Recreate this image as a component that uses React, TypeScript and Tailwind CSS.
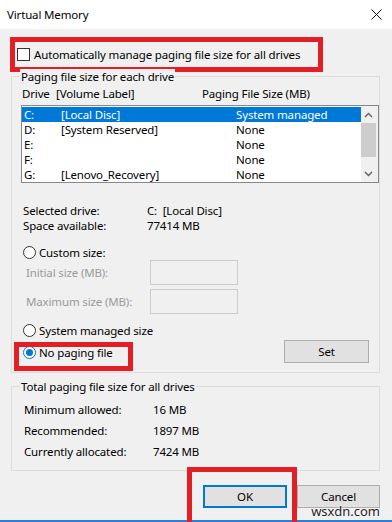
import React from "react";

const font = { fontFamily: '"Noto Sans", "Open Sans", sans-serif' };

function Radio({ checked }: { checked?: boolean }) {
  return (
    <span
      className={
        "flex h-[13px] w-[13px] shrink-0 items-center justify-center rounded-full border bg-white " +
        (checked ? "border-[#0078d7]" : "border-[#333333]")
      }
    >
      {checked && <span className="h-[7px] w-[7px] rounded-full bg-[#0078d7]" />}
    </span>
  );
}

function GroupLabel({ children }: { children: React.ReactNode }) {
  return (
    <div className="-mt-[8px] ml-[8px] w-fit bg-[#f0f0f0] px-[1px] leading-[15px]">{children}</div>
  );
}

const drives = [
  { d: "C:", label: "[Local Disc]", size: "System managed" },
  { d: "D:", label: "[System Reserved]", size: "None" },
  { d: "E:", label: "", size: "None" },
  { d: "F:", label: "", size: "None" },
  { d: "G:", label: "[Lenovo_Recovery]", size: "None" },
];

export default function App() {
  return (
    <div
      className="relative flex h-[522px] w-[392px] flex-col overflow-hidden bg-[#f0f0f0] text-[11.5px] leading-[15px] tracking-[-0.15px] text-black"
      style={font}
    >
      {/* title bar */}
      <div className="flex h-[29px] shrink-0 items-center justify-between bg-white pl-[7px] pr-[10px]">
        <span>Virtual Memory</span>
        <svg width="11" height="11" viewBox="0 0 11 11" className="-mt-[1px]">
          <path d="M0.5 0.5 L10.5 10.5 M10.5 0.5 L0.5 10.5" stroke="#111" strokeWidth="1" />
        </svg>
      </div>

      <div className="flex flex-1 flex-col pl-[11px] pr-[12px]">
        {/* auto manage checkbox, highlighted */}
        <div className="-ml-[1px] mt-[8px] flex h-[35px] w-[313px] items-center border-[5px] border-[#e31e24] pl-[2px]">
          <span className="h-[13px] w-[13px] shrink-0 border border-[#333333] bg-white" />
          <span className="ml-[4px] whitespace-nowrap">Automatically manage paging file size for all drives</span>
        </div>

        {/* paging file size for each drive */}
        <div className="mt-[4px] flex h-[297px] w-[369px] flex-col border border-[#dcdcdc]">
          <GroupLabel>Paging file size for each drive</GroupLabel>
          <div className="mt-[2px] flex pl-[10px]">
            <span className="w-[34px]">Drive</span>
            <span className="w-[146px]">[Volume Label]</span>
            <span>Paging File Size (MB)</span>
          </div>

          <div className="ml-[9px] mt-[4px] flex h-[78px] w-[358px] border border-[#828790] bg-white">
            <div className="flex-1 pt-[1px]">
              {drives.map((r, i) => (
                <div
                  key={r.d}
                  className={"flex h-[15px] items-center pl-[2px] " + (i === 0 ? "bg-[#0078d7] text-white" : "")}
                >
                  <span className="w-[37px]">{r.d}</span>
                  <span className="w-[175px]">{r.label}</span>
                  <span>{r.size}</span>
                </div>
              ))}
            </div>
            <div className="flex w-[17px] flex-col bg-[#f0f0f0] pr-[2px]">
              <div className="flex h-[17px] items-center justify-center">
                <svg width="9" height="6" viewBox="0 0 9 6">
                  <path d="M1 5 L4.5 1.5 L8 5" fill="none" stroke="#606060" strokeWidth="1.4" />
                </svg>
              </div>
              <div className="h-[34px] bg-[#cdcdcd]" />
              <div className="flex-1" />
              <div className="flex h-[17px] items-center justify-center">
                <svg width="9" height="6" viewBox="0 0 9 6">
                  <path d="M1 1 L4.5 4.5 L8 1" fill="none" stroke="#606060" strokeWidth="1.4" />
                </svg>
              </div>
            </div>
          </div>

          <div className="mt-[20px] pl-[11px]">
            <div className="flex">
              <span className="w-[124px]">Selected drive:</span>
              <span>C:&nbsp; [Local Disc]</span>
            </div>
            <div className="flex">
              <span className="w-[124px]">Space available:</span>
              <span>77414 MB</span>
            </div>
          </div>

          <div className="mt-[12px] flex items-center pl-[11px]">
            <Radio />
            <span className="ml-[3px]">Custom size:</span>
          </div>
          <div className="flex items-center pl-[14px] text-[#9a9a9a]">
            <span className="w-[124px]">Initial size (MB):</span>
            <span className="h-[25px] w-[88px] border border-[#cccccc]" />
          </div>
          <div className="mt-[4px] flex items-center pl-[14px] text-[#9a9a9a]">
            <span className="w-[124px]">Maximum size (MB):</span>
            <span className="h-[25px] w-[88px] border border-[#cccccc]" />
          </div>

          <div className="mt-[9px] flex items-center pl-[11px]">
            <Radio />
            <span className="ml-[3px]">System managed size</span>
          </div>
          <div className="flex items-start justify-between pl-[11px] pr-[10px]">
            <div className="relative mt-[7px] flex items-center">
              <Radio checked />
              <span className="ml-[3px]">No paging file</span>
              <div className="absolute -left-[9px] -top-[3px] h-[29px] w-[119px] border-[5px] border-[#e31e24]" />
            </div>
            <button className="mt-[2px] h-[23px] w-[85px] border border-[#adadad] bg-[#e1e1e1]">Set</button>
          </div>
        </div>

        {/* totals */}
        <div className="mt-[13px] flex h-[85px] w-[369px] flex-col border border-[#dcdcdc]">
          <GroupLabel>Total paging file size for all drives</GroupLabel>
          <div className="mt-[8px] flex flex-col gap-[6px] pl-[12px]">
            <div className="flex">
              <span className="w-[129px]">Minimum allowed:</span>
              <span>16 MB</span>
            </div>
            <div className="flex">
              <span className="w-[129px]">Recommended:</span>
              <span>1897 MB</span>
            </div>
            <div className="flex">
              <span className="w-[129px]">Currently allocated:</span>
              <span>7424 MB</span>
            </div>
          </div>
        </div>

        <div className="mt-[14px] flex gap-[10px] pl-[192px]">
          <div className="relative">
            <button className="h-[23px] w-[84px] border-2 border-[#0078d7] bg-[#e1e1e1]">OK</button>
            <div className="absolute -left-[16px] -top-[18px] z-10 h-[70px] w-[110px] border-[5px] border-[#e31e24]" />
          </div>
          <button className="h-[23px] w-[85px] border border-[#adadad] bg-[#e1e1e1]">Cancel</button>
        </div>
      </div>

      <div className="h-[2px] shrink-0 bg-[#2b7fd4]" />
      <span className="absolute bottom-[3px] right-[12px] text-[13px] leading-[15px] tracking-normal text-[#222] [text-shadow:0_0_2px_#fff,0_0_2px_#fff]">
        wsxdn.com
      </span>
    </div>
  );
}
